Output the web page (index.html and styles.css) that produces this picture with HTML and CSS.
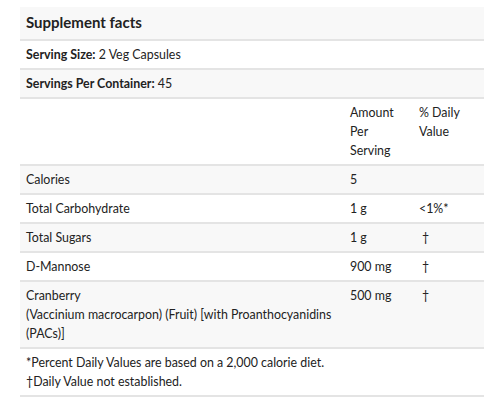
FILE: index.html
```html
<!DOCTYPE html>
<html lang="en">

<head>
    <meta charset="UTF-8">
    <meta name="viewport" content="width=device-width, initial-scale=1.0">
    <title>Supplement facts</title>
    <link rel="stylesheet" href="styles.css">
</head>

<body>

    <table class="facts">
        <colgroup>
            <col class="col-name">
            <col class="col-amount">
            <col class="col-dv">
        </colgroup>
        <thead>
            <tr class="shade">
                <th colspan="3" class="facts-title">Supplement facts</th>
            </tr>
        </thead>
        <tbody>
            <tr>
                <td colspan="3"><strong>Serving Size:</strong> 2 Veg Capsules</td>
            </tr>
            <tr class="shade">
                <td colspan="3"><strong>Servings Per Container:</strong> 45</td>
            </tr>
            <tr>
                <td></td>
                <td>Amount Per Serving</td>
                <td>% Daily Value</td>
            </tr>
            <tr class="shade">
                <td>Calories</td>
                <td>5</td>
                <td></td>
            </tr>
            <tr>
                <td>Total Carbohydrate</td>
                <td>1 g</td>
                <td>&lt;1%*</td>
            </tr>
            <tr class="shade">
                <td>Total Sugars</td>
                <td>1 g</td>
                <td class="dagger">&dagger;</td>
            </tr>
            <tr>
                <td>D-Mannose</td>
                <td>900 mg</td>
                <td class="dagger">&dagger;</td>
            </tr>
            <tr class="shade">
                <td>Cranberry<br>(Vaccinium macrocarpon) (Fruit) [with Proanthocyanidins (PACs)]</td>
                <td>500 mg</td>
                <td class="dagger">&dagger;</td>
            </tr>
            <tr>
                <td colspan="3">*Percent Daily Values are based on a 2,000 calorie diet.<br>&dagger;Daily Value not established.</td>
            </tr>
        </tbody>
    </table>

</body>

</html>
```

FILE: styles.css
```css
body {
    background: #fff;
    color: #222;
    font-family: Lato, 'Open Sans', sans-serif;
    font-size: 12.4px;
    margin: 0;
    padding: 7px 15px 0 20px;
}

.facts {
    border-collapse: collapse;
    table-layout: fixed;
    width: 464px;
}

.col-name {
    width: 324px;
}

.col-amount {
    width: 69px;
}

.col-dv {
    width: 71px;
}

.facts th,
.facts td {
    border-bottom: 2px solid #e4e4e4;
    line-height: 19px;
    padding: 4px 2px 4px 6px;
    text-align: left;
    vertical-align: top;
}

.facts .facts-title {
    font-size: 15px;
    font-weight: bold;
    padding: 6px 6px 7px;
}

.shade {
    background: #f8f8f8;
}

.facts .dagger {
    padding-left: 9px;
}
```
